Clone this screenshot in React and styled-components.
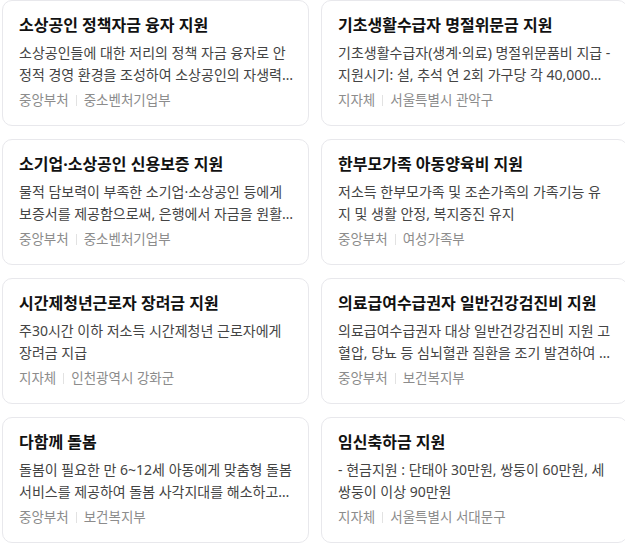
import React from "react";
import styled, { createGlobalStyle } from "styled-components";

const GlobalStyle = createGlobalStyle`
  html, body {
    margin: 0;
    padding: 0;
    background: #fff;
    overflow: hidden;
  }
  body {
    font-family: "Noto Sans", "Noto Sans CJK KR", sans-serif;
  }
`;

const Grid = styled.div`
  display: grid;
  grid-template-columns: 307px 307px;
  grid-auto-rows: 126px;
  column-gap: 12px;
  row-gap: 13px;
  padding-left: 2px;
  width: 640px;
`;

const Card = styled.div`
  box-sizing: border-box;
  border: 1px solid #e8e8ec;
  border-radius: 10px;
  background: #fff;
  padding: 13px 14px 0 16px;
  display: flex;
  flex-direction: column;
`;

const Title = styled.h3`
  margin: 0;
  font-size: 16px;
  font-weight: 700;
  line-height: 22px;
  color: #111;
  white-space: nowrap;
  overflow: hidden;
  text-overflow: ellipsis;
`;

const Desc = styled.p`
  margin: 6px 0 0;
  font-size: 14px;
  line-height: 21.5px;
  color: #444;
  display: -webkit-box;
  -webkit-line-clamp: 2;
  -webkit-box-orient: vertical;
  overflow: hidden;
`;

const Meta = styled.div`
  display: flex;
  align-items: center;
  margin-top: 6px;
  font-size: 13.5px;
  line-height: 18px;
  color: #8c8c8c;
`;

const Sep = styled.span`
  display: inline-block;
  width: 1px;
  height: 11px;
  background: #e2e2e2;
  margin: 0 7px;
`;

const items = [
  {
    title: "소상공인 정책자금 융자 지원",
    desc: "소상공인들에 대한 저리의 정책 자금 융자로 안정적 경영 환경을 조성하여 소상공인의 자생력 강화 및 경쟁력 제고",
    type: "중앙부처",
    org: "중소벤처기업부",
  },
  {
    title: "기초생활수급자 명절위문금 지원",
    desc: "기초생활수급자(생계·의료) 명절위문품비 지급 - 지원시기: 설, 추석 연 2회 가구당 각 40,000원 지원",
    type: "지자체",
    org: "서울특별시 관악구",
  },
  {
    title: "소기업·소상공인 신용보증 지원",
    desc: "물적 담보력이 부족한 소기업·소상공인 등에게 보증서를 제공함으로써, 은행에서 자금을 원활하게 조달할 수 있도록 지원",
    type: "중앙부처",
    org: "중소벤처기업부",
  },
  {
    title: "한부모가족 아동양육비 지원",
    desc: "저소득 한부모가족 및 조손가족의 가족기능 유지 및 생활 안정, 복지증진 유지",
    type: "중앙부처",
    org: "여성가족부",
  },
  {
    title: "시간제청년근로자 장려금 지원",
    desc: "주30시간 이하 저소득 시간제청년 근로자에게 장려금 지급",
    type: "지자체",
    org: "인천광역시 강화군",
  },
  {
    title: "의료급여수급권자 일반건강검진비 지원",
    desc: "의료급여수급권자 대상 일반건강검진비 지원 고혈압, 당뇨 등 심뇌혈관 질환을 조기 발견하여 치료할 수 있도록 지원",
    type: "중앙부처",
    org: "보건복지부",
  },
  {
    title: "다함께 돌봄",
    desc: "돌봄이 필요한 만 6~12세 아동에게 맞춤형 돌봄 서비스를 제공하여 돌봄 사각지대를 해소하고 아동의 건강한 성장 지원",
    type: "중앙부처",
    org: "보건복지부",
  },
  {
    title: "임신축하금 지원",
    desc: "- 현금지원 : 단태아 30만원, 쌍둥이 60만원, 세쌍둥이 이상 90만원",
    type: "지자체",
    org: "서울특별시 서대문구",
  },
];

const App = () => {
  return (
    <>
      <GlobalStyle />
      <Grid>
        {items.map((item) => (
          <Card key={item.title}>
            <Title>{item.title}</Title>
            <Desc>{item.desc}</Desc>
            <Meta>
              <span>{item.type}</span>
              <Sep />
              <span>{item.org}</span>
            </Meta>
          </Card>
        ))}
      </Grid>
    </>
  );
};

export default App;
